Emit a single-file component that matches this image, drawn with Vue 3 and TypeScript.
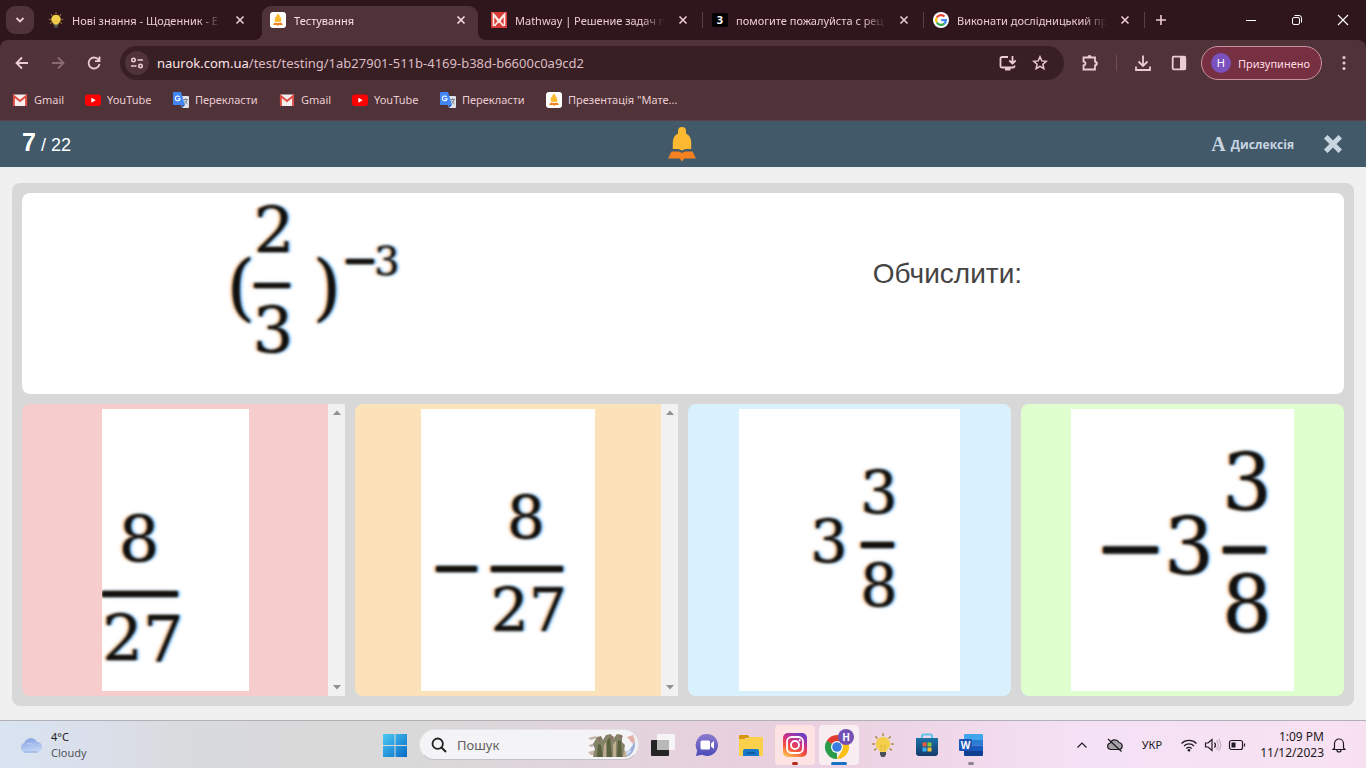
<script setup lang="ts">
import { ref } from 'vue'

interface Tab { id: string; title: string; active?: boolean }
interface Bookmark { kind: 'gmail' | 'youtube' | 'translate' | 'bell'; label: string }
interface Digit { t: string; x: number; y: number }
interface Bar { x: number; y: number; w: number }
interface Answer {
  tone: string
  label: string
  width: number
  size: number
  thick: number
  scroll: boolean
  digits: Digit[]
  bars: Bar[]
}

const tabs: Tab[] = [
  { id: 'bulb', title: 'Нові знання - Щоденник - Е' },
  { id: 'bell', title: 'Тестування', active: true },
  { id: 'mathway', title: 'Mathway | Решение задач п' },
  { id: 'znanija', title: 'помогите пожалуйста с рец' },
  { id: 'google', title: 'Виконати дослідницький пр' },
]

const bookmarks: Bookmark[] = [
  { kind: 'gmail', label: 'Gmail' },
  { kind: 'youtube', label: 'YouTube' },
  { kind: 'translate', label: 'Перекласти' },
  { kind: 'gmail', label: 'Gmail' },
  { kind: 'youtube', label: 'YouTube' },
  { kind: 'translate', label: 'Перекласти' },
  { kind: 'bell', label: 'Презентація "Мате...' },
]

const answers: Answer[] = [
  {
    tone: 'red', label: '8/27', width: 147, size: 64, thick: 6, scroll: true,
    digits: [{ t: '8', x: 37, y: 153 }, { t: '27', x: 41, y: 252 }],
    bars: [{ x: 0, y: 185, w: 76 }],
  },
  {
    tone: 'orange', label: '−8/27', width: 174, size: 60, thick: 6, scroll: true,
    digits: [{ t: '8', x: 105, y: 130 }, { t: '27', x: 108, y: 222 }],
    bars: [{ x: 15, y: 160, w: 41 }, { x: 70, y: 160, w: 72 }],
  },
  {
    tone: 'blue', label: '3 3/8', width: 221, size: 59, thick: 6, scroll: false,
    digits: [{ t: '3', x: 140, y: 105 }, { t: '3', x: 90, y: 154 }, { t: '8', x: 140, y: 198 }],
    bars: [{ x: 122, y: 136, w: 33 }],
  },
  {
    tone: 'green', label: '−3 3/8', width: 223, size: 78, thick: 7, scroll: false,
    digits: [{ t: '3', x: 176, y: 101 }, { t: '3', x: 118, y: 165 }, { t: '8', x: 176, y: 223 }],
    bars: [{ x: 32, y: 141, w: 55 }, { x: 152, y: 141, w: 43 }],
  },
]

const url = ref({ host: 'naurok.com.ua', path: '/test/testing/1ab27901-511b-4169-b38d-b6600c0a9cd2' })
const query = ref('')
const rays: number[] = [0, 45, 90, 125, 235, 270, 315]
</script>

<template>
  <div class="screen">
    <svg class="defs" aria-hidden="true">
      <symbol id="bell" viewBox="0 0 28 34">
        <path d="M14 0a4 4 0 0 1 4 4v2.500C21.500 8 23.200 11.500 23.200 15v7H17.500l-3.500 1.600L10.500 22H4.800v-7C4.800 11.500 6.500 8 10 6.500V4a4 4 0 0 1 4-4z" fill="#fdb930" />
        <path d="M3.500 24.500h7.500l3 1.500 3-1.500h7.500L28 31.500H16l-1 2.300h-2l-1-2.300H0z" fill="#f58220" />
      </symbol>
      <symbol id="bulb" viewBox="0 0 24 24">
        <g stroke="#a8843f" stroke-width="1.500" stroke-linecap="round">
          <line v-for="r in rays" :key="r" x1="12" y1="0.800" x2="12" y2="2.400" :transform="`rotate(${r} 12 11)`" />
        </g>
        <path d="M12 4a7 7 0 0 1 4.500 12.400L15 19H9l-1.500-2.600A7 7 0 0 1 12 4z" fill="#f4cf4c" />
        <path d="M10.500 18l-1-6 2.500 1.500 2.500-1.500-1 6" fill="none" stroke="#e2b23a" stroke-width=".8" />
        <path d="M9 19h6v2.500L13.500 24h-3L9 21.500z" fill="#4a5057" />
      </symbol>
      <symbol id="x" viewBox="0 0 10 10"><path d="M1.500 1.500l7 7m0-7l-7 7" stroke="currentColor" stroke-width="1.600" fill="none" /></symbol>
    </svg>

    <header class="browser">
      <div class="strip">
        <button class="search-tabs" aria-label="Пошук вкладок">
          <svg width="12" height="12" viewBox="0 0 12 12"><path d="M2.500 4l3.500 3.500L9.500 4" fill="none" stroke="currentColor" stroke-width="1.800" /></svg>
        </button>
        <div class="tabs">
          <div v-for="tab in tabs" :key="tab.id" class="tab" :class="[{ active: tab.active }, tab.id]">
            <svg v-if="tab.id === 'bulb'" width="16" height="16"><use href="#bulb" /></svg>
            <svg v-else-if="tab.id === 'bell'" width="16" height="16"><rect width="16" height="16" rx="3" fill="#fff" /><use href="#bell" x="3" y="2" width="10" height="12" /></svg>
            <svg v-else-if="tab.id === 'mathway'" width="16" height="16" viewBox="0 0 16 16">
              <rect width="16" height="16" fill="#d93b38" /><path d="M2.500 14V2.500L8 10l5.500-7.500V14M3 2.500L12.500 14M13 2.500L3.500 14" fill="none" stroke="#ffe9e6" stroke-width="1.700" />
            </svg>
            <span v-else-if="tab.id === 'znanija'" class="three">3</span>
            <svg v-else width="16" height="16" viewBox="0 0 16 16">
              <circle cx="8" cy="8" r="8" fill="#fff" />
              <g fill="none" stroke-width="2.200">
                <path d="M11.500 4.600A4.900 4.900 0 0 0 3.800 5.500" stroke="#ea4335" />
                <path d="M3.800 5.500a4.900 4.900 0 0 0 0 5" stroke="#fbbc05" />
                <path d="M3.800 10.500a4.900 4.900 0 0 0 7.500 1.100" stroke="#34a853" />
                <path d="M11.300 11.600A4.900 4.900 0 0 0 12.900 8.100H8.200" stroke="#4285f4" />
              </g>
            </svg>
            <span class="title">{{ tab.title }}</span>
            <button class="close" aria-label="Закрити вкладку"><svg width="10" height="10"><use href="#x" /></svg></button>
          </div>
        </div>
        <button class="new-tab" aria-label="Нова вкладка">
          <svg width="12" height="12" viewBox="0 0 12 12"><path d="M6 1v10M1 6h10" stroke="currentColor" stroke-width="1.600" /></svg>
        </button>
        <div class="window-controls">
          <button aria-label="Згорнути"><svg width="12" height="12" viewBox="0 0 12 12"><path d="M1 6.500h10" stroke="currentColor" /></svg></button>
          <button aria-label="Відновити"><svg width="12" height="12" viewBox="0 0 12 12" fill="none" stroke="currentColor"><rect x="1.500" y="3.500" width="7" height="7" rx="1.500" /><path d="M3.500 1.500h4.500a2.500 2.500 0 0 1 2.500 2.500v4.500" /></svg></button>
          <button aria-label="Закрити"><svg width="12" height="12" viewBox="0 0 12 12"><path d="M1 1l10 10M11 1L1 11" stroke="currentColor" stroke-width="1.100" /></svg></button>
        </div>
      </div>

      <div class="toolbar">
        <nav class="nav">
          <button aria-label="Назад"><svg width="16" height="16" viewBox="0 0 16 16"><path d="M14 8H3M8 2.500L2.500 8 8 13.500" /></svg></button>
          <button class="dim" aria-label="Вперед"><svg width="16" height="16" viewBox="0 0 16 16"><path d="M2 8h11M8 2.500L13.500 8 8 13.500" /></svg></button>
          <button aria-label="Оновити"><svg width="16" height="16" viewBox="0 0 16 16"><path d="M13 5.500A5.500 5.500 0 1 0 13.500 9M13.500 1.500v4.700H9" /></svg></button>
        </nav>
        <div class="omnibox">
          <button class="site" aria-label="Відомості про сайт">
            <svg width="14" height="14" viewBox="0 0 14 14"><circle cx="3.500" cy="4" r="1.700" /><path d="M7.500 4H13M1 10h5.500" /><circle cx="10.500" cy="10" r="1.700" /></svg>
          </button>
          <div class="url"><span>{{ url.host }}</span>{{ url.path }}</div>
          <button aria-label="Установити"><svg width="18" height="16" viewBox="0 0 18 16"><path d="M9 2H3a1.500 1.500 0 0 0-1.500 1.500v7.500A1.500 1.500 0 0 0 3 12.500h11a1.500 1.500 0 0 0 1.500-1.500V10.500M13.500 1v7M10.300 5.500l3.200 3 3.200-3" /><path d="M6 14.200h5.500" stroke-width="2.500" /></svg></button>
          <button aria-label="Закладка"><svg width="16" height="16" viewBox="0 0 16 16"><path d="M8 1.800l1.800 4.100 4.500.4-3.400 3 1 4.400L8 11.400l-3.900 2.300 1-4.400-3.400-3 4.500-.4z" stroke-width="1.500" /></svg></button>
        </div>
        <div class="tools">
          <button aria-label="Розширення"><svg width="18" height="18" viewBox="0 0 18 18"><path d="M2.500 3.500h11.500v4.200a1.800 1.800 0 0 1 0 3.600v4.200H2.500v-4a2 2 0 0 0 0-4z" /><path d="M6.500 3a2 2 0 0 1 4 0zM14.500 7.500a2 2 0 0 1 0 4z" fill="currentColor" stroke="none" /></svg></button>
          <i class="sep"></i>
          <button aria-label="Завантаження"><svg width="18" height="18" viewBox="0 0 18 18"><path d="M9 1.500v10M4.500 7.500L9 12l4.500-4.500M2 12.500V16h14v-3.500" /></svg></button>
          <button aria-label="Бічна панель"><svg width="16" height="16" viewBox="0 0 16 16"><rect x="1.700" y="1.700" width="12.600" height="12.600" rx="1" /><path d="M9 1.500h5.500v13H9z" fill="currentColor" stroke="none" /></svg></button>
          <button class="profile"><b>Н</b>Призупинено</button>
          <button class="menu" aria-label="Меню"><svg width="4" height="16" viewBox="0 0 4 16"><g fill="currentColor" stroke="none"><circle cx="2" cy="2.500" r="1.500" /><circle cx="2" cy="8" r="1.500" /><circle cx="2" cy="13.500" r="1.500" /></g></svg></button>
        </div>
      </div>

      <nav class="bookmarks">
        <a v-for="(b, i) in bookmarks" :key="i" href="#">
          <svg v-if="b.kind === 'gmail'" width="16" height="16" viewBox="0 0 16 16"><rect x="1" y="2.500" width="14" height="11.500" rx="1" fill="#f5eeee" /><path d="M1.900 14V4L8 9l6.100-5v10" fill="none" stroke="#dd4b42" stroke-width="2" /></svg>
          <svg v-else-if="b.kind === 'youtube'" width="16" height="16" viewBox="0 0 16 16"><rect y="2.500" width="16" height="11.500" rx="3" fill="#f00" /><path d="M6.300 5.700v5l4.400-2.500z" fill="#fff" /></svg>
          <svg v-else-if="b.kind === 'translate'" width="16" height="16" viewBox="0 0 16 16"><path d="M6 4h9a1 1 0 0 1 1 1v10a1 1 0 0 1-1 1H9z" fill="#dfe3e8" /><path d="M1 0h7l4 13H1a1 1 0 0 1-1-1V1a1 1 0 0 1 1-1z" fill="#4285f4" /><path d="M8.500 13H12l-3 3z" fill="#2a5cb8" /><path d="M6.600 4.900A2.400 2.400 0 1 0 7.100 6.800H4.700" fill="none" stroke="#fff" stroke-width="1.100" /><path d="M10.500 7.500h4.500M12.700 6.500v1M14 7.500c-.3 2-1.500 3.500-2.700 4.500M11.500 8.500c.7 1.600 1.700 2.700 3 3.500" stroke="#6a7a8a" fill="none" stroke-width=".9" /></svg>
          <svg v-else width="16" height="16"><rect width="16" height="16" rx="3" fill="#fff" /><use href="#bell" x="3" y="2" width="10" height="12" /></svg>
          {{ b.label }}
        </a>
      </nav>
    </header>

    <div class="quiz-bar">
      <div class="count"><b>7</b> / 22</div>
      <svg class="logo" width="28" height="34"><use href="#bell" /></svg>
      <div class="quiz-tools">
        <button class="dyslexia"><span>A</span>Дислексія</button>
        <button aria-label="Вийти"><svg width="18" height="18" viewBox="0 0 18 18"><path d="M3.500 3.500l11 11m0-11l-11 11" stroke="#c9d6e2" stroke-width="5" stroke-linecap="square" /></svg></button>
      </div>
    </div>

    <main class="main">
      <div class="panel">
        <section class="question">
          <svg class="math" width="360" height="200" viewBox="0 0 360 200" role="img" aria-label="(2/3) у степені −3">
            <g class="ink" font-size="64">
              <text x="168" y="59">2</text>
              <text x="167" y="159">3</text>
              <text x="135" y="118" font-size="73">(</text>
              <text x="221" y="118" font-size="73">)</text>
              <text x="281" y="81" font-size="40">3</text>
              <rect x="148" y="89" width="36" height="5" rx="1" />
              <rect x="240" y="65" width="28" height="5" rx="1" />
            </g>
          </svg>
          <h1>Обчислити:</h1>
        </section>
        <section class="answers">
          <div v-for="a in answers" :key="a.label" class="answer" :class="a.tone">
            <button class="pick" :aria-label="a.label">
              <svg class="math" :width="a.width" height="282" :viewBox="`0 0 ${a.width} 282`">
                <g class="ink" :font-size="a.size">
                  <text v-for="(d, i) in a.digits" :key="i" :x="d.x" :y="d.y">{{ d.t }}</text>
                  <rect v-for="(b, i) in a.bars" :key="i" :x="b.x" :y="b.y - a.thick / 2" :width="b.w" :height="a.thick" rx="1" />
                </g>
              </svg>
            </button>
            <div v-if="a.scroll" class="scroll">
              <svg width="8" height="5" viewBox="0 0 8 5"><path d="M0 5l4-4.500L8 5z" fill="#909090" /></svg>
              <svg width="8" height="5" viewBox="0 0 8 5"><path d="M0 0l4 4.500L8 0z" fill="#909090" /></svg>
            </div>
          </div>
        </section>
      </div>
    </main>

    <footer class="taskbar">
      <button class="weather">
        <svg width="24" height="16" viewBox="0 0 24 16">
          <defs><linearGradient id="cl" x1="0" y1="0" x2="0.300" y2="1"><stop offset="0" stop-color="#7f9fe0" /><stop offset="1" stop-color="#c3d4f5" /></linearGradient></defs>
          <path d="M5.500 15.500a5 5 0 0 1-.3-9.500A7 7 0 0 1 18 4.800a5.400 5.400 0 0 1 .7 10.700z" fill="url(#cl)" />
          <path d="M5.500 15h13" stroke="#8aa4dc" /><path d="M8 7c3-1.500 6 0 7 2.500" fill="none" stroke="#b9cbf2" stroke-width="1.300" />
        </svg>
        <span>4°C<br><em>Cloudy</em></span>
      </button>

      <div class="apps">
        <button class="tile" aria-label="Пуск">
          <svg width="24" height="24" viewBox="0 0 24 24"><defs><linearGradient id="wn" x1="0" y1="0" x2="1" y2="1"><stop offset="0" stop-color="#4ccbf5" /><stop offset="1" stop-color="#0669c5" /></linearGradient></defs><path d="M0 1h11.500v11H0zM12.500 1H24v11H12.500zM0 13h11.500v11H0zM12.500 13H24v11H12.500z" fill="url(#wn)" /></svg>
        </button>
        <label class="search">
          <svg width="16" height="16" viewBox="0 0 16 16"><circle cx="6.700" cy="6.700" r="5.200" fill="none" stroke="#222" stroke-width="1.800" /><path d="M10.500 10.500l4.500 4.500" stroke="#222" stroke-width="1.900" /></svg>
          <input v-model="query" type="text" placeholder="Пошук" aria-label="Пошук">
          <svg width="48" height="24" viewBox="0 0 48 24">
            <path d="M0 5l8-2 1 2-6 2zM1 12l6-2 1 3-6 1zM0 19l8-2v5H3z" fill="#c3b5aa" />
            <path d="M34 23c6-3 9-8 13-15 1 8-3 13-6 15z" fill="#9db3dc" /><path d="M36 19l6-3 1 3-5 4z" fill="#c9d8ee" /><path d="M39 4l6-2 2 5-2 4z" fill="#e3b0aa" />
            <path d="M5 24l2-8-2-5 4-7 4-1 2 4 3-5 5-1 2 5 4-5 5 1v7l3 3-1 6 3 6z" fill="#85836a" />
            <path d="M9 24l1-13 3 1 2 12zM19 24V8l3-4 2 20zM29 24l1-17 3 1 1 16z" fill="#59613f" />
            <path d="M15 24l1-12 2-3v15zM25 24V11l3-3v16zM35 24l1-8 2 3v5z" fill="#c0ad90" />
            <path d="M10 4l3 1-2 4zM23 2l3 2-2 4zM31 2l4 1-2 3z" fill="#8f6b63" />
          </svg>
        </label>
        <button class="tile" aria-label="Подання завдань"><svg width="24" height="24" viewBox="0 0 24 24"><rect x="0" y="7" width="18" height="16" rx="1" fill="#242424" /><rect x="6" y="1" width="18" height="16" rx="1" fill="#f6f4f6" /><path d="M6 7h12v10H6z" fill="#b9b9b9" /></svg></button>
        <button class="tile" aria-label="Чат"><svg width="24" height="24" viewBox="0 0 24 24"><defs><linearGradient id="ch" x1="0" y1="0" x2="0" y2="1"><stop offset="0" stop-color="#8d7ccf" /><stop offset="1" stop-color="#4b4bb8" /></linearGradient></defs><path d="M12 1a11 11 0 1 1-5 20.800L1 23l1.200-5.500A11 11 0 0 1 12 1z" fill="url(#ch)" /><rect x="5.500" y="7.500" width="9.500" height="9" rx="1.500" fill="#fff" /><path d="M16 10.500l3-2.500v8l-3-2.500z" fill="#fff" /></svg></button>
        <button class="tile" aria-label="Провідник"><svg width="26" height="24" viewBox="0 0 26 24"><path d="M1 3a1 1 0 0 1 1-1h8l2 3h-4l-7 4z" fill="#d9960f" /><path d="M1 6h8l2-2h13a1 1 0 0 1 1 1v17a1 1 0 0 1-1 1H2a1 1 0 0 1-1-1z" fill="#fbd04b" /><path d="M5 23v-5a2 2 0 0 1 2-2h12a2 2 0 0 1 2 2v5z" fill="#1977c8" /><path d="M9 20h8" stroke="#0e528f" stroke-width="1.500" /></svg></button>
        <button class="tile lit pink" aria-label="Instagram">
          <svg width="24" height="24" viewBox="0 0 24 24"><defs><linearGradient id="ig" x1="0.200" y1="1" x2="0.700" y2="0"><stop offset="0" stop-color="#fdc04d" /><stop offset=".35" stop-color="#f4513c" /><stop offset=".65" stop-color="#cf2f87" /><stop offset="1" stop-color="#6a3ec4" /></linearGradient></defs><rect width="24" height="24" rx="5" fill="url(#ig)" /><g fill="none" stroke="#fff" stroke-width="1.800"><rect x="4" y="4" width="16" height="16" rx="4.500" /><circle cx="12" cy="12" r="4" /></g><circle cx="16.700" cy="7.300" r="1.100" fill="#fff" /></svg>
          <i class="mark red-mark"></i>
        </button>
        <button class="tile lit" aria-label="Chrome">
          <svg width="30" height="32" viewBox="0 0 30 32"><path d="M13 18L2.600 12A12 12 0 0 1 23.400 12z" fill="#e33b2e" /><path d="M13 18V30A12 12 0 0 1 2.600 12z" fill="#2a9a4b" /><path d="M13 18l10.400-6A12 12 0 0 1 13 30l5.200-9z" fill="#fbc116" /><path d="M13 12h10.400L18 21z" fill="#fbc116" /><path d="M2.600 12l5.200 9 5.200-3z" fill="#2a9a4b" /><circle cx="13" cy="18" r="6" fill="#fff" /><circle cx="13" cy="18" r="4.800" fill="#3b7de0" /><circle cx="22" cy="8" r="8" fill="#7350b4" /><text x="22" y="12" text-anchor="middle" class="badge">Н</text></svg>
          <i class="mark wide"></i>
        </button>
        <button class="tile" aria-label="Нові знання"><svg width="24" height="24"><use href="#bulb" /></svg></button>
        <button class="tile" aria-label="Store"><svg width="24" height="24" viewBox="0 0 24 24"><defs><linearGradient id="st" x1="0" y1="0" x2="0" y2="1"><stop offset="0" stop-color="#1b73a8" /><stop offset="1" stop-color="#143a6b" /></linearGradient></defs><path d="M7 6V3a1.500 1.500 0 0 1 1.500-1.500h7A1.500 1.500 0 0 1 17 3v3" fill="none" stroke="#5fc3ea" stroke-width="2" /><path d="M1 5h22v15a3 3 0 0 1-3 3H4a3 3 0 0 1-3-3z" fill="url(#st)" /><path d="M7.500 9.500h4v4h-4z" fill="#ef5a3c" /><path d="M12.500 9.500h4v4h-4z" fill="#8cc63f" /><path d="M7.500 14.500h4v4h-4z" fill="#35b1ef" /><path d="M12.500 14.500h4v4h-4z" fill="#fbc02d" /></svg></button>
        <button class="tile" aria-label="Word">
          <svg width="24" height="24" viewBox="0 0 24 24"><path d="M6 1h17a1 1 0 0 1 1 1v5H5V2a1 1 0 0 1 1-1z" fill="#41a5ee" /><path d="M5 7h19v5.500H5z" fill="#2b7cd3" /><path d="M5 12.500h19V18H5z" fill="#185abd" /><path d="M5 18h19v4a1 1 0 0 1-1 1H6a1 1 0 0 1-1-1z" fill="#103f91" /><rect y="6" width="13" height="12" rx="1" fill="#1b56b5" /><text x="6.500" y="16" text-anchor="middle" class="badge">W</text></svg>
          <i class="mark gray"></i>
        </button>
      </div>

      <div class="tray">
        <button aria-label="Приховані значки"><svg width="12" height="12" viewBox="0 0 12 12"><path d="M1.500 8.500L6 4l4.500 4.500" /></svg></button>
        <button aria-label="OneDrive"><svg width="18" height="16" viewBox="0 0 18 16"><path d="M4.500 12.500a3.300 3.300 0 0 1-.2-6.500A4.800 4.800 0 0 1 13 5.500a3.600 3.600 0 0 1 .7 7z" fill="#a7a3a8" /><path d="M2 2l13.500 12.500" /></svg></button>
        <button class="lang">УКР</button>
        <button class="status" aria-label="Мережа, звук, батарея">
          <svg width="18" height="16" viewBox="0 0 18 16"><path d="M1.500 6.500a10.500 10.500 0 0 1 15 0M4 9a7 7 0 0 1 10 0M6.300 11.500a3.800 3.800 0 0 1 5.400 0" /><circle cx="9" cy="13.300" r="1.300" fill="currentColor" stroke="none" /></svg>
          <svg width="18" height="16" viewBox="0 0 18 16"><path d="M1.500 6h2.500l4-3.500v11L4 10H1.500z" /><path d="M10.500 5.500a4 4 0 0 1 0 5" /><path d="M12.500 3.500a6.500 6.500 0 0 1 0 9M14.500 2a9 9 0 0 1 0 12" opacity=".25" /></svg>
          <svg width="18" height="16" viewBox="0 0 18 16"><rect x="1.500" y="3.500" width="13" height="9" rx="2" /><rect x="3.500" y="5.500" width="4" height="5" fill="currentColor" stroke="none" /><path d="M16.500 6.500v3" /></svg>
        </button>
        <button class="clock">1:09 PM<br>11/12/2023</button>
        <button aria-label="Сповіщення"><svg width="14" height="16" viewBox="0 0 14 16"><path d="M2.500 11V6.500a4.500 4.500 0 0 1 9 0V11l1.500 1.500H1zM5 13a2 2 0 0 0 4 0" /></svg></button>
      </div>
    </footer>
  </div>
</template>

<style>
html, body { margin: 0; }
</style>

<style scoped>
* { box-sizing: border-box; }
.screen { min-height: 100vh; display: flex; flex-direction: column; overflow: hidden; font-family: "Noto Sans", "Open Sans", sans-serif; font-size: 12px; background: #f0f0f0; }
.defs { position: absolute; width: 0; height: 0; }
button { border: 0; padding: 0; background: none; color: inherit; font: inherit; display: flex; align-items: center; justify-content: center; flex: none; }
svg { flex: none; display: block; }

.browser { background: #2f161c; color: #ecccd3; font-size: 11px; }
.strip { height: 40px; display: flex; align-items: center; }
.search-tabs { width: 28px; height: 28px; margin: 0 5px 0 6px; border-radius: 9px; background: #4f3339; }
.tabs { display: flex; min-width: 0; align-self: stretch; padding-top: 6px; }
.tab { position: relative; flex: 0 1 221px; width: 221px; min-width: 0; height: 34px; padding: 0 15px 6px 9px; display: flex; align-items: center; gap: 8px; }
.tab .title { flex: 1; min-width: 0; white-space: nowrap; overflow: hidden; -webkit-mask-image: linear-gradient(90deg, #000 84%, transparent); mask-image: linear-gradient(90deg, #000 84%, transparent); }
.tab .close { margin-left: 5px; }
.tab.mathway::after, .tab.znanija::after, .tab.google::after { content: ""; position: absolute; right: 0; top: 6px; width: 1px; height: 16px; background: #5d3d44; }
.tab.active { background: #4f3339; border-radius: 9px 9px 0 0; margin: 0 4px 0 2px; flex-basis: 216px; padding: 0 12px 6px 8px; color: #f9dfe4; }
.tab.active::before, .tab.active::after { content: ""; position: absolute; bottom: 0; width: 8px; height: 8px; }
.tab.active::before { left: -8px; background: radial-gradient(circle at 0 0, transparent 8px, #4f3339 8px); }
.tab.active::after { right: -8px; background: radial-gradient(circle at 100% 0, transparent 8px, #4f3339 8px); }
.three { width: 16px; height: 14px; line-height: 14px; flex: none; border-radius: 2px; background: #000; color: #fff; font-weight: 700; text-align: center; }
.new-tab { margin-left: 10px; }
.window-controls { margin-left: auto; display: flex; color: #fff; }
.window-controls button { width: 46px; height: 40px; }

.toolbar { display: flex; align-items: center; height: 46px; padding: 0 12px 0 6px; background: #4f3339; border-radius: 8px 8px 0 0; }
.toolbar svg { fill: none; stroke: currentColor; stroke-width: 1.8; }
.nav { display: flex; gap: 4px; }
.nav button { width: 32px; height: 34px; }
.nav .dim { color: #8c6a71; }
.omnibox { flex: 1; min-width: 0; height: 34px; margin-left: 10px; padding: 0 16px 0 5px; display: flex; align-items: center; gap: 15px; border-radius: 17px; background: #381f24; }
.site { width: 24px; height: 24px; border-radius: 50%; background: #4f3339; margin-right: -7px; }
.site svg { stroke-width: 1.6; }
.url { flex: 1; min-width: 0; overflow: hidden; white-space: nowrap; font-size: 13px; color: #dcbcc3; }
.url span { color: #fbe6ea; }
.tools { display: flex; align-items: center; margin-left: 17px; }
.sep { width: 1px; height: 16px; margin: 0 17px; background: #704c54; }
.tools button + button { margin-left: 19px; }
.tools .profile { height: 34px; margin-left: 14px; padding: 0 11px 0 9px; border: 1px solid #c9949f; border-radius: 17px; background: #772f42; color: #ffdce3; gap: 7px; }
.profile b { width: 20px; height: 20px; line-height: 20px; border-radius: 50%; background: #7a51bd; color: #fff; font-weight: 400; text-align: center; }
.tools .menu { width: 20px; margin-left: 12px; }

.bookmarks { display: grid; grid-template-columns: 73px 88px 106px 73px 88px 106px auto; height: 35px; padding: 0 12px 7px; align-items: center; background: #4f3339; border-bottom: 1px solid #5b4349; }
.bookmarks a { display: flex; align-items: center; gap: 6px; color: #ecccd3; text-decoration: none; white-space: nowrap; }

.quiz-bar { display: grid; grid-template-columns: 1fr auto 1fr; align-items: center; min-height: 46px; padding: 0 24px 0 22px; background: #42596a; color: #fff; font-family: "Liberation Sans", Arial, sans-serif; font-size: 18px; }
.count { padding-bottom: 3px; }
.count b { font-size: 25px; }
.quiz-tools { display: flex; justify-content: flex-end; align-items: center; gap: 30px; color: #c9d6e2; }
.dyslexia { font: 700 12px "Open Sans", sans-serif; gap: 5px; }
.dyslexia span { font: 700 20px "Liberation Serif", serif; }

.main { flex: 1; display: flex; padding: 16px 12px 14px; }
.panel { flex: 1; min-width: 0; display: flex; flex-direction: column; gap: 10px; padding: 10px; background: #d8d8d8; border-radius: 8px; }
.question { display: grid; grid-template-columns: 2fr 3fr; align-items: center; justify-items: center; min-height: 201px; background: #fff; border-radius: 8px; }
.question h1 { margin: 0; padding-bottom: 40px; font: 400 28px "Liberation Sans", Arial, sans-serif; color: #444; }
.math { background: #fff; }
.ink { font-family: "DejaVu Serif", serif; text-anchor: middle; fill: #111; filter: blur(1px) drop-shadow(-2px 0 1px rgba(255, 140, 30, .6)) drop-shadow(2px 0 1px rgba(30, 150, 255, .6)); }
.answers { flex: 1; display: grid; grid-template-columns: repeat(4, minmax(0, 1fr)); gap: 10px; }
.answer { display: flex; border-radius: 8px; overflow: hidden; }
.pick { flex: 1; min-width: 0; padding: 5px 0; overflow: hidden; }
.scroll { width: 17px; display: flex; flex-direction: column; align-items: center; justify-content: space-between; padding: 6px 0; background: #f1f1f1; }
.red { background: #f6cccc; border-radius: 8px 0 0 8px; }
.orange { background: #fbe2b9; border-radius: 8px 0 0 8px; }
.blue { background: #d9f1fc; }
.green { background: #e0ffcf; }

.taskbar { display: grid; grid-template-columns: 1fr auto 1fr; align-items: center; height: 48px; border-top: 1px solid #b1b0b6; background: linear-gradient(90deg, #d9e4f2 0, #dadfea 7%, #d9dadc 14%, #d9d9d9 30%, #e3d3dc 46%, #e9d0df 56%, #eed5e5 66%, #f5e1f6 80%, #f7e1f1 100%); color: #1f1a20; }
.weather { justify-self: start; margin-left: 19px; gap: 8px; text-align: left; line-height: 16px; font-size: 11px; }
.weather em { font-style: normal; color: #55555c; }
.apps { display: flex; align-items: center; gap: 4px; }
.tile { position: relative; width: 40px; height: 40px; border-radius: 4px; }
.lit { background: #f8eef2; }
.lit.pink { background: #fde3e3; }
.tile .mark { position: absolute; bottom: 0; left: 17px; width: 6px; height: 3px; border-radius: 2px; background: #8d858d; }
.tile .red-mark { background: #b32b1e; }
.tile .wide { left: 12px; width: 16px; background: #1673c4; }
.badge { fill: #fff; font: 700 10px "Noto Sans", sans-serif; }
.search { display: flex; align-items: center; width: 220px; height: 31px; padding: 0 2px 0 11px; border: 1px solid #e3e1e4; border-bottom-color: #c4c2c6; border-radius: 16px; background: #f4f3f5; }
.search input { flex: 1; min-width: 0; border: 0; outline: 0; padding: 0 0 0 10px; background: none; font: 13px "Noto Sans", sans-serif; color: #222; }
.search input::placeholder { color: #606060; opacity: 1; }
.tray { justify-self: end; display: flex; align-items: center; margin-right: 20px; }
.tray svg { fill: none; stroke: currentColor; stroke-width: 1.2; }
.tray button + button { margin-left: 18px; }
.tray .status { gap: 6px; }
.tray .clock { display: block; text-align: right; line-height: 16px; font-size: 12px; margin-left: 14px; }
.tray .clock + button { margin-left: 8px; }
.lang { font-size: 11px; }
</style>
